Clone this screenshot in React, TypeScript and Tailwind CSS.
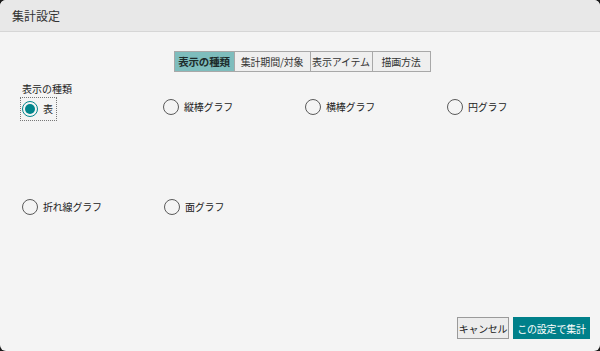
import React from 'react'

const font = { fontFamily: '"Noto Sans CJK JP", "Noto Sans", sans-serif' }

const tabs = [
  { label: '表示の種類', w: 'w-[61px]' },
  { label: '集計期間/対象', w: 'w-[77px]' },
  { label: '表示アイテム', w: 'w-[63px]' },
  { label: '描画方法', w: 'w-[59px]' },
]

function Radio({ label, checked }: { label: string; checked?: boolean }) {
  return (
    <div className="flex items-center gap-[5px] h-[16px]">
      <span
        className={
          'flex items-center justify-center w-[16px] h-[16px] rounded-full border-[1.5px] ' +
          (checked ? 'border-[#00858c]' : 'border-[#5a5a5a]')
        }
      >
        {checked && <span className="w-[10px] h-[10px] rounded-full bg-[#00858c]" />}
      </span>
      <span className="text-[10px] leading-none text-[#222] tracking-[-0.2px]">{label}</span>
    </div>
  )
}

export default function App() {
  return (
    <div className="w-[600px] h-[351px] bg-[#1a1a1a]" style={font}>
      <div className="w-full h-full rounded-[6px] overflow-hidden bg-[#f4f4f4] flex flex-col">
        <div className="h-[32px] bg-[#e8e8e8] border-b border-[#d6d6d6] flex items-center px-[12px]">
          <span className="text-[12px] text-[#333]">集計設定</span>
        </div>

        <div className="flex justify-center pt-[19px] pl-[4px]">
          <div className="flex">
            {tabs.map((t, i) => (
              <div
                key={t.label}
                className={
                  'h-[21px] flex items-center justify-center tracking-[-0.2px] border border-[#a8a8a8] ' +
                  t.w + ' ' +
                  (i > 0 ? '-ml-px ' : '') +
                  (i === 0 ? 'bg-[#7ebdbd] font-bold text-[10.5px] text-[#1c2b2b]' : 'bg-[#efefef] text-[10px] text-[#333]')
                }
              >
                {t.label}
              </div>
            ))}
          </div>
        </div>

        <div className="px-[21px] pt-[12px] flex-1 flex flex-col">
          <div className="text-[10px] leading-none text-[#222] pl-[1px]">表示の種類</div>
          <div className="grid grid-cols-[141px_142px_142px_1fr] mt-[1px]">
            <div className="pl-[1px]">
              <div className="inline-flex border border-dotted border-[#777] pl-[1px] pr-[3px] py-[3px] -ml-[2px]">
                <Radio label="表" checked />
              </div>
            </div>
            <div className="pt-[4px] pl-[1px]"><Radio label="縦棒グラフ" /></div>
            <div className="pt-[4px] pl-[1px]"><Radio label="横棒グラフ" /></div>
            <div className="pt-[4px] pl-[1px]"><Radio label="円グラフ" /></div>
          </div>
          <div className="grid grid-cols-[141px_142px_142px_1fr] mt-[78px] pl-[1px]">
            <Radio label="折れ線グラフ" />
            <div className="pl-[1px]"><Radio label="面グラフ" /></div>
          </div>

          <div className="flex-1" />
          <div className="flex justify-end gap-[4px] pb-[12px] -mr-[11px]">
            <button className="w-[52px] h-[22px] text-[10px] tracking-[-0.3px] bg-[#ececec] border border-[#9a9a9a] text-[#222]">
              キャンセル
            </button>
            <button className="w-[77px] h-[22px] text-[10px] tracking-[-0.2px] bg-[#00808a] text-white border border-[#00808a]">
              この設定で集計
            </button>
          </div>
        </div>
      </div>
    </div>
  )
}
